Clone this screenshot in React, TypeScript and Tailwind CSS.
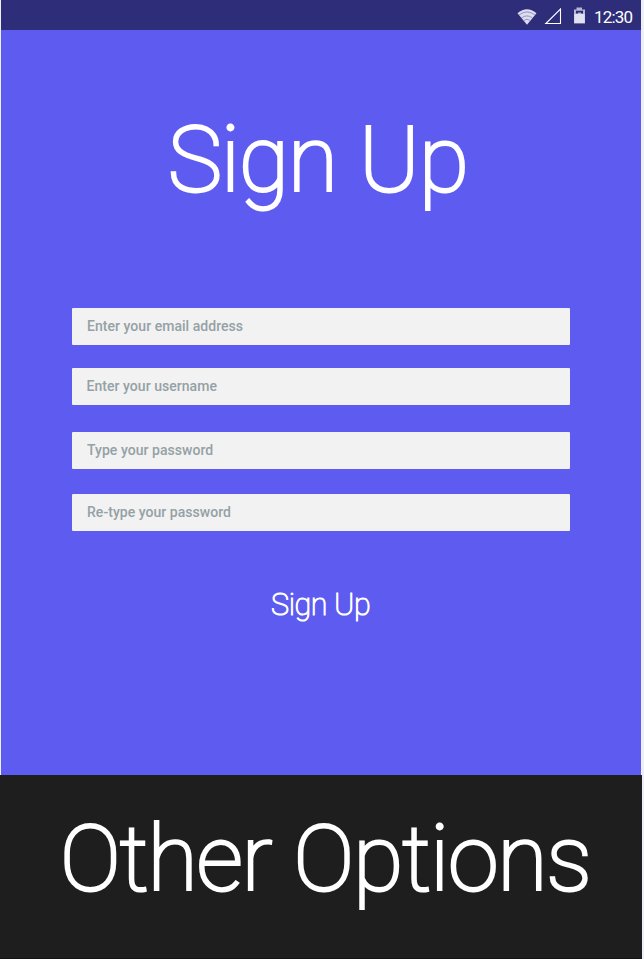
const fields = [
  { label: 'Enter your email address', place: 'ml-[72px] mt-0 pb-[2px]' },
  { label: 'Enter your username', place: 'ml-[71.5px] mt-[23px] pb-[2px]' },
  { label: 'Type your password', place: 'ml-[72px] mt-[27px] pb-[1px]' },
  { label: 'Re-type your password', place: 'ml-[72px] mt-[25px] pb-[1px]' },
];

function StatusBar() {
  return (
    <div className="flex h-[30px] items-start bg-[#2d2d7a] text-white">
      <svg className="ml-[516px] mt-[9px]" width="20" height="16" viewBox="0 0 20 16">
        <path d="M0.5 4.2 Q10 -3.6 19.5 4.2 L10 15.8Z" fill="#dddcf0" />
        <path d="M2 6 Q10 -0.2 18 6M4.4 9 Q10 4.8 15.6 9M6.5 11.5 Q10 9 13.5 11.5" fill="none" stroke="#8584ae" strokeWidth="0.8" />
      </svg>
      <svg className="ml-[7px] mt-[8px]" width="18" height="17" viewBox="0 0 18 17">
        <path d="M1.8 15.5H16.5V1Z" fill="none" stroke="#fff" strokeWidth="1.1" />
      </svg>
      <svg className="ml-[11px] mt-[7px]" width="13" height="18" viewBox="0 0 13 18">
        <path d="M3.5 2.5V.5H9V2.5H12V16.5H1V2.5Z" fill="#b7b6d5" />
        <path d="M1.3 7H11.7V16H1.3Z" fill="#e2e1f1" />
        <path d="M3 3.8H10V6.5H8V5.5H5V6.5H3Z" fill="#2d2d7a" />
      </svg>
      <span className="ml-[8px] mt-[7px] text-[17px] leading-[20px] tracking-[-0.8px]">12:30</span>
    </div>
  );
}

export default function App() {
  return (
    <div className="flex h-[959px] w-[644px] flex-col overflow-hidden bg-[#eeeef6] font-['Roboto',sans-serif]">
      <main className="ml-px flex h-[775px] w-[640px] shrink-0 flex-col bg-[#5e5cf0]">
        <StatusBar />
        <h1 className="ml-[167px] mt-[75px] h-[120px] whitespace-nowrap text-[91px] font-thin leading-[110px] tracking-[-0.8px] text-white [word-spacing:1px] [-webkit-text-stroke:3px_white]">Sign Up</h1>
        <form className="-ml-px mt-[83px] h-[223px]">
          {fields.map((field) => (
            <input
              key={field.label}
              aria-label={field.label}
              placeholder={field.label}
              className={`block h-[37px] w-[498px] rounded-[1px] bg-[#f2f2f2] px-[15px] text-[14px] font-medium tracking-[0.04px] outline-none placeholder:text-[#94a1a5] ${field.place}`}
            />
          ))}
        </form>
        <button className="ml-[270px] mt-[55px] h-[38px] w-[120px] whitespace-nowrap text-left text-[30.5px] font-thin leading-[38px] tracking-[-0.4px] text-white [-webkit-text-stroke:1.1px_white]">Sign Up</button>
      </main>
      <footer className="h-[184px] w-[642px] border-b border-[#141414] bg-[#1e1e1e]">
        <h2 className="ml-[60px] mt-[29px] whitespace-nowrap text-[91px] font-thin leading-[110px] tracking-[-0.8px] text-white [word-spacing:1px] [-webkit-text-stroke:3px_white]">Other Options</h2>
      </footer>
    </div>
  );
}
